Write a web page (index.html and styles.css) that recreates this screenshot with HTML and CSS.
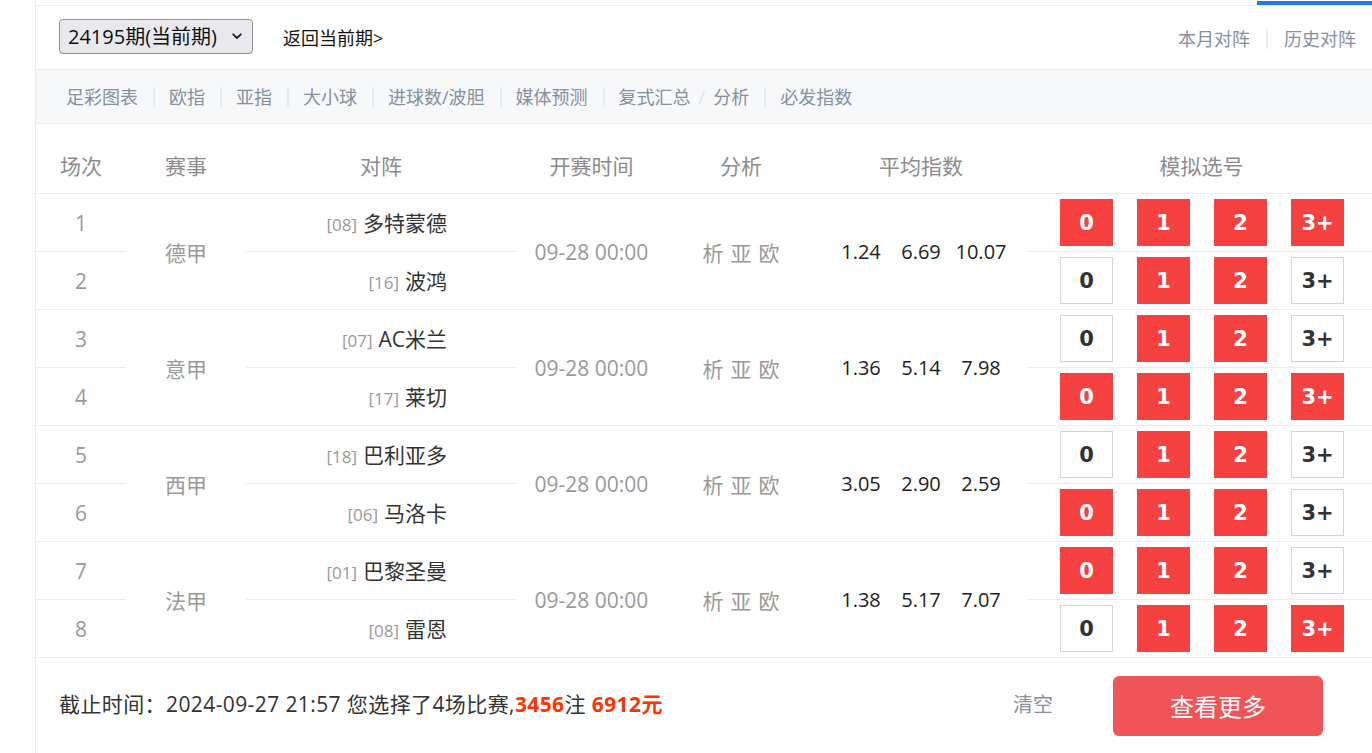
FILE: index.html
```html
<!DOCTYPE html>
<html lang="zh-CN">
<head>
<meta charset="utf-8">
<title>足彩对阵</title>
<link rel="stylesheet" href="styles.css">
</head>
<body>
<div class="page">
  <div class="topstrip"><span class="tab-indicator"></span></div>

  <div class="toolbar">
    <div class="toolbar-left">
      <div class="issue-select">
        <span>24195期(当前期)</span>
        <svg class="chev" width="10" height="7" viewBox="0 0 10 7"><path d="M1.2 1.3 L5 5 L8.8 1.3" fill="none" stroke="#222" stroke-width="1.8" stroke-linecap="round" stroke-linejoin="round"/></svg>
      </div>
      <a class="back-link">返回当前期&gt;</a>
    </div>
    <div class="toolbar-right">
      <a class="toplink">本月对阵</a>
      <span class="vsep"></span>
      <a class="toplink">历史对阵</a>
    </div>
  </div>

  <nav class="subnav">
    <a class="navitem">足彩图表</a><span class="nsep"></span>
    <a class="navitem">欧指</a><span class="nsep"></span>
    <a class="navitem">亚指</a><span class="nsep"></span>
    <a class="navitem">大小球</a><span class="nsep"></span>
    <a class="navitem">进球数/波胆</a><span class="nsep"></span>
    <a class="navitem">媒体预测</a><span class="nsep"></span>
    <a class="navitem">复式汇总</a><span class="slash">/</span>
    <a class="navitem">分析</a><span class="nsep"></span>
    <a class="navitem">必发指数</a>
  </nav>

  <div class="grid thead">
    <div class="th">场次</div>
    <div class="th">赛事</div>
    <div class="th">对阵</div>
    <div class="th">开赛时间</div>
    <div class="th">分析</div>
    <div class="th th-odds">平均指数</div>
    <div class="th th-pick">模拟选号</div>
  </div>

  <div class="grid group">
    <div class="cell num line">1</div>
    <div class="cell league span">德甲</div>
    <div class="cell team line"><span class="rank">[08]</span><span class="tname">多特蒙德</span></div>
    <div class="cell time span">09-28 00:00</div>
    <div class="cell ana span"><span>析</span><span>亚</span><span>欧</span></div>
    <div class="cell odds span"><span>1.24</span><span>6.69</span><span>10.07</span></div>
    <div class="cell picks line"><span class="pb on">0</span><span class="pb on">1</span><span class="pb on">2</span><span class="pb on">3+</span></div>
    <div class="cell num">2</div>
    <div class="cell team"><span class="rank">[16]</span><span class="tname">波鸿</span></div>
    <div class="cell picks"><span class="pb">0</span><span class="pb on">1</span><span class="pb on">2</span><span class="pb">3+</span></div>
  </div>

  <div class="grid group">
    <div class="cell num line">3</div>
    <div class="cell league span">意甲</div>
    <div class="cell team line"><span class="rank">[07]</span><span class="tname">AC米兰</span></div>
    <div class="cell time span">09-28 00:00</div>
    <div class="cell ana span"><span>析</span><span>亚</span><span>欧</span></div>
    <div class="cell odds span"><span>1.36</span><span>5.14</span><span>7.98</span></div>
    <div class="cell picks line"><span class="pb">0</span><span class="pb on">1</span><span class="pb on">2</span><span class="pb">3+</span></div>
    <div class="cell num">4</div>
    <div class="cell team"><span class="rank">[17]</span><span class="tname">莱切</span></div>
    <div class="cell picks"><span class="pb on">0</span><span class="pb on">1</span><span class="pb on">2</span><span class="pb on">3+</span></div>
  </div>

  <div class="grid group">
    <div class="cell num line">5</div>
    <div class="cell league span">西甲</div>
    <div class="cell team line"><span class="rank">[18]</span><span class="tname">巴利亚多</span></div>
    <div class="cell time span">09-28 00:00</div>
    <div class="cell ana span"><span>析</span><span>亚</span><span>欧</span></div>
    <div class="cell odds span"><span>3.05</span><span>2.90</span><span>2.59</span></div>
    <div class="cell picks line"><span class="pb">0</span><span class="pb on">1</span><span class="pb on">2</span><span class="pb">3+</span></div>
    <div class="cell num">6</div>
    <div class="cell team"><span class="rank">[06]</span><span class="tname">马洛卡</span></div>
    <div class="cell picks"><span class="pb on">0</span><span class="pb on">1</span><span class="pb on">2</span><span class="pb">3+</span></div>
  </div>

  <div class="grid group">
    <div class="cell num line">7</div>
    <div class="cell league span">法甲</div>
    <div class="cell team line"><span class="rank">[01]</span><span class="tname">巴黎圣曼</span></div>
    <div class="cell time span">09-28 00:00</div>
    <div class="cell ana span"><span>析</span><span>亚</span><span>欧</span></div>
    <div class="cell odds span"><span>1.38</span><span>5.17</span><span>7.07</span></div>
    <div class="cell picks line"><span class="pb on">0</span><span class="pb on">1</span><span class="pb on">2</span><span class="pb">3+</span></div>
    <div class="cell num">8</div>
    <div class="cell team"><span class="rank">[08]</span><span class="tname">雷恩</span></div>
    <div class="cell picks"><span class="pb">0</span><span class="pb on">1</span><span class="pb on">2</span><span class="pb on">3+</span></div>
  </div>

  <div class="footer">
    <div class="summary">截止时间：2024-09-27 21:57 您选择了4场比赛,<b class="hl">3456</b>注 <b class="hl">6912元</b></div>
    <div class="footer-actions">
      <a class="clear">清空</a>
      <a class="more-btn">查看更多</a>
    </div>
  </div>
</div>
</body>
</html>
```

FILE: styles.css
```css
* { box-sizing: border-box; }
html, body { margin: 0; padding: 0; background: #fff; }
body {
  font-family: "Open Sans", "Noto Sans CJK SC", sans-serif;
  color: #333;
  width: 1372px;
  height: 753px;
  overflow: hidden;
}
a { text-decoration: none; cursor: pointer; }

.page {
  margin-left: 35px;
  border-left: 1px solid #ececec;
  min-height: 753px;
}

.topstrip {
  position: relative;
  height: 6px;
  border-bottom: 1px solid #ececec;
}
.tab-indicator {
  position: absolute;
  right: 0;
  top: 1px;
  width: 115px;
  height: 4px;
  background: #1f7ce2;
}

.toolbar {
  height: 64px;
  border-bottom: 1px solid #ececec;
  display: flex;
  align-items: center;
  justify-content: space-between;
  padding: 0 16px 0 23px;
}
.toolbar-left { display: flex; align-items: center; }
.issue-select {
  width: 194px;
  height: 35px;
  margin-top: -2px;
  border: 1px solid #8f8f9d;
  border-radius: 4px;
  background: #e9e9ed;
  display: flex;
  align-items: center;
  justify-content: space-between;
  padding: 0 8px 0 8px;
  font-size: 20px;
  color: #111;
  line-height: 1;
}
.chev { margin-right: 2px; }
.back-link {
  margin-left: 30px;
  font-size: 18px;
  color: #111;
  line-height: 1;
}
.toolbar-right { display: flex; align-items: center; margin-top: 3px; }
.toplink { font-size: 18px; color: #8590a0; line-height: 1; }
.vsep {
  width: 2px;
  height: 20px;
  background: #eceef1;
  margin: 0 16px;
}

.subnav {
  height: 54px;
  background: #f7f8fa;
  border-bottom: 1px solid #ececec;
  display: flex;
  align-items: center;
  padding-left: 30px;
}
.navitem {
  font-size: 18px;
  color: #8590a0;
  line-height: 1;
}
.nsep {
  width: 2px;
  height: 20px;
  background: #e9ebee;
  margin: 0 14px 0 15px;
}
.slash {
  font-size: 18px;
  color: #e3e5e9;
  margin: 0 8px;
  line-height: 1;
}

.grid {
  display: grid;
  grid-template-columns: 90px 120px 270px 151px 148px 212px 1fr;
}

.thead {
  height: 70px;
  border-bottom: 1px solid #ececec;
}
.th {
  padding-top: 27px;
  text-align: center;
  font-size: 21px;
  line-height: 28px;
  color: #8c8c8c;
  font-family: "Noto Sans CJK SC", sans-serif;
}
.th-pick { padding-left: 4px; }

.group {
  grid-template-rows: 58px 57px;
  border-bottom: 1px solid #ececec;
}
.cell {
  display: flex;
  align-items: center;
  justify-content: center;
}
.cell.line { border-bottom: 1px solid #ececec; }
.cell.span { grid-row: span 2; }

.num { font-size: 21px; color: #999; }
.league { font-size: 21px; color: #999; font-family: "Noto Sans CJK SC", sans-serif; }
.team {
  justify-content: flex-end;
  align-items: baseline;
  padding-top: 13px;
  padding-right: 69px;
}
.rank { font-size: 17px; color: #999; margin-right: 6px; }
.tname { font-size: 21px; color: #333; }
.time { font-size: 21px; color: #999; }
.ana { font-size: 21px; color: #999; gap: 7px; font-family: "Noto Sans CJK SC", sans-serif; }
.odds { font-size: 20px; color: #222; }
.odds span { width: 60px; text-align: center; }

.picks {
  justify-content: flex-start;
  padding-left: 33px;
  gap: 24px;
}
.pb {
  width: 53px;
  height: 47px;
  border: 1px solid #d4d4d4;
  background: #fff;
  color: #333;
  display: flex;
  align-items: center;
  justify-content: center;
  font-family: "DejaVu Sans", sans-serif;
  font-weight: bold;
  font-size: 21px;
}
.pb.on {
  background: #f64141;
  border-color: #f64141;
  color: #fff;
}

.footer {
  height: 95px;
  display: flex;
  align-items: center;
  justify-content: space-between;
  padding: 0 49px 0 23px;
}
.summary {
  font-size: 21px;
  letter-spacing: 0.4px;
  color: #333;
  margin-top: -5px;
}
.hl { color: #ff3300; font-weight: bold; }
.footer-actions { display: flex; align-items: center; }
.clear { font-size: 20px; color: #8590a0; margin-right: 60px; margin-top: -4px; }
.more-btn {
  width: 210px;
  height: 60px;
  border-radius: 6px;
  background: #f05457;
  color: #fff;
  font-size: 24px;
  display: flex;
  align-items: center;
  justify-content: center;
  font-family: "Noto Sans CJK SC", sans-serif;
}
```
